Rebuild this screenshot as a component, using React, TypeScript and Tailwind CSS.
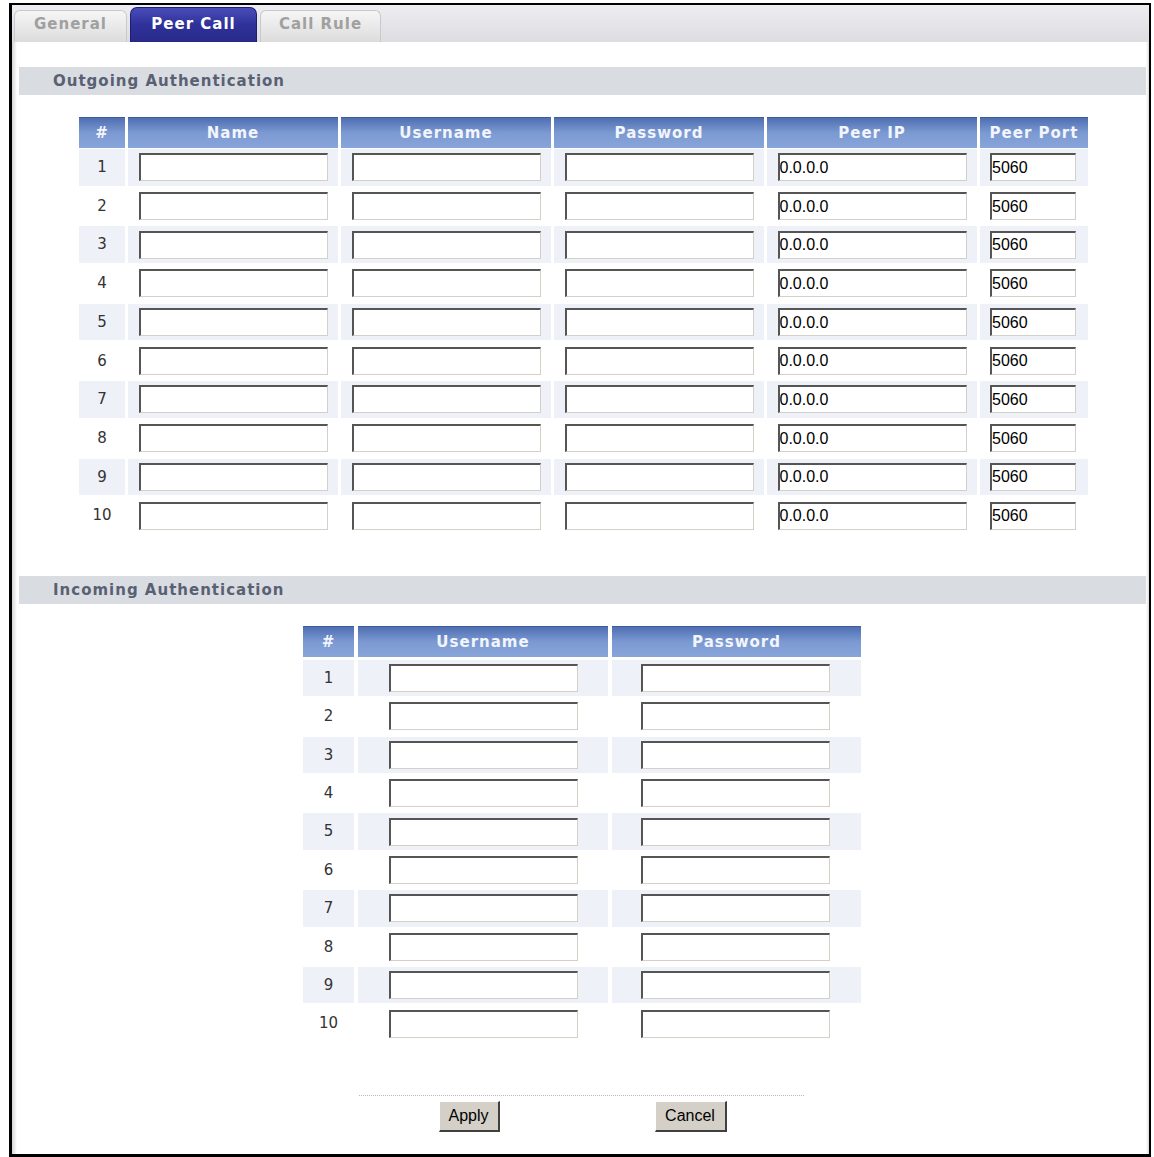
import React from "react";

const verdana = { fontFamily: '"DejaVu Sans", Verdana, sans-serif' };
const arial = { fontFamily: '"Liberation Sans", Arial, sans-serif' };

function TextBox({ value = "", w = 189 }: { value?: string; w?: number }) {
  return (
    <div
      className="h-[28px] shrink-0 bg-white border-t-2 border-l-2 border-b border-r border-t-[#555555] border-l-[#555555] border-b-[#d4d0c8] border-r-[#d4d0c8] flex items-center text-[16px] text-black leading-none overflow-hidden"
      style={{ ...arial, width: w }}
    >
      {value}
    </div>
  );
}

function HeadCell({ children, w }: { children: React.ReactNode; w: number }) {
  return (
    <div
      className="h-[31px] shrink-0 flex items-center justify-center bg-gradient-to-b from-[#4f6fb2] via-[#7c9ad2] to-[#88a5da] text-[#f2f5fc] font-bold text-[15px] tracking-[1px] border-t border-t-[#3e5c9e]"
      style={{ ...verdana, width: w }}
    >
      {children}
    </div>
  );
}

function SectionBar({ title }: { title: string }) {
  return (
    <div className="ml-[2px] h-[28px] bg-[#d9dde1] flex items-center pl-[34px]">
      <span className="text-[15px] font-bold text-[#5a6074] tracking-[1px]" style={verdana}>
        {title}
      </span>
    </div>
  );
}

function Tab({ label, active, w }: { label: string; active?: boolean; w: number }) {
  if (active) {
    return (
      <div
        className="h-[35px] rounded-t-[7px] bg-gradient-to-b from-[#4a4cb8] via-[#2f319a] to-[#282a8a] border border-[#1c1e6e] border-b-0 flex items-center justify-center text-white font-bold text-[15px] tracking-[1px] pb-[2px]"
        style={{ ...verdana, width: w }}
      >
        {label}
      </div>
    );
  }
  return (
    <div
      className="h-[32px] rounded-t-[6px] bg-gradient-to-b from-[#f6f6f6] to-[#dcdcdc] border border-[#c9c9cc] border-b-0 flex items-center justify-center text-[#a0a0a0] font-bold text-[15px] tracking-[1px] pb-[4px]"
      style={{ ...verdana, width: w }}
    >
      {label}
    </div>
  );
}

export default function App() {
  const rows = Array.from({ length: 10 }, (_, i) => i + 1);
  const outCols = [210, 210, 210];
  return (
    <div className="w-[1154px] h-[1157px] bg-white relative overflow-hidden">
      <div className="ml-[9px] mt-[3px] w-[1142px] h-[1154px] border-l-[3px] border-t-2 border-r-2 border-b-[3px] border-black flex flex-col">
        {/* tab strip */}
        <div className="h-[37px] bg-gradient-to-b from-[#eeedf1] to-[#dddce1] flex items-end pl-[2px] gap-[3px] shrink-0">
          <Tab label="General" w={113} />
          <Tab label="Peer Call" active w={127} />
          <Tab label="Call Rule" w={121} />
        </div>
        {/* body */}
        <div className="flex-1 flex min-w-0">
          <div className="w-[5px] shrink-0 bg-gradient-to-r from-[#d4d4d6] to-white" />
          <div className="flex-1 min-w-0 flex flex-col">
            <div className="h-[25px]" />
            <SectionBar title="Outgoing Authentication" />
            {/* Outgoing table */}
            <div className="mt-[22px] flex flex-col items-center pl-[4px]">
              <div className="flex gap-[3px]">
                <HeadCell w={46}>#</HeadCell>
                <HeadCell w={210}>Name</HeadCell>
                <HeadCell w={210}>Username</HeadCell>
                <HeadCell w={210}>Password</HeadCell>
                <HeadCell w={210}>Peer IP</HeadCell>
                <HeadCell w={108}>Peer Port</HeadCell>
              </div>
              {rows.map((r) => {
                const bg = r % 2 === 1 ? "bg-[#eef1f7]" : "bg-white";
                return (
                  <div key={r} className="flex gap-[3px] h-[38.7px] py-[1px]">
                    <div
                      className={`${bg} w-[46px] shrink-0 flex items-center justify-center text-[15px] text-[#333333]`}
                      style={verdana}
                    >
                      {r}
                    </div>
                    {outCols.map((w, ci) => (
                      <div key={ci} className={`${bg} shrink-0 flex items-center justify-center`} style={{ width: w }}>
                        <TextBox />
                      </div>
                    ))}
                    <div className={`${bg} w-[210px] shrink-0 flex items-center justify-center`}>
                      <TextBox value="0.0.0.0" />
                    </div>
                    <div className={`${bg} w-[108px] shrink-0 flex items-center justify-center pr-[2px]`}>
                      <TextBox value="5060" w={86} />
                    </div>
                  </div>
                );
              })}
            </div>
            <div className="h-[41px]" />
            <SectionBar title="Incoming Authentication" />
            {/* Incoming table */}
            <div className="mt-[22px] flex flex-col items-center pl-[1px]">
              <div className="flex gap-[4px] mb-[2px]">
                <HeadCell w={51}>#</HeadCell>
                <HeadCell w={250}>Username</HeadCell>
                <HeadCell w={249}>Password</HeadCell>
              </div>
              {rows.map((r) => {
                const bg = r % 2 === 1 ? "bg-[#eef1f7]" : "bg-white";
                return (
                  <div key={r} className="flex gap-[4px] h-[38.4px] py-[1px]">
                    <div
                      className={`${bg} w-[51px] shrink-0 flex items-center justify-center text-[15px] text-[#333333]`}
                      style={verdana}
                    >
                      {r}
                    </div>
                    <div className={`${bg} w-[250px] shrink-0 flex items-center justify-center`}>
                      <TextBox />
                    </div>
                    <div className={`${bg} w-[249px] shrink-0 flex items-center justify-center pr-[2px]`}>
                      <TextBox />
                    </div>
                  </div>
                );
              })}
            </div>
            {/* buttons */}
            <div className="mt-[52px] flex flex-col items-center">
              <div className="w-[445px] border-t border-dotted border-[#b8b8b8]" />
              <div className="mt-[5px] flex gap-[155px] pl-[2px]">
                <button
                  className="w-[61px] h-[31px] bg-[#d4d0c8] border-t border-l border-t-white border-l-white border-r-2 border-b-2 border-r-[#404040] border-b-[#404040] text-[16px] text-black"
                  style={arial}
                >
                  Apply
                </button>
                <button
                  className="w-[72px] h-[31px] bg-[#d4d0c8] border-t border-l border-t-white border-l-white border-r-2 border-b-2 border-r-[#404040] border-b-[#404040] text-[16px] text-black"
                  style={arial}
                >
                  Cancel
                </button>
              </div>
            </div>
          </div>
          <div className="w-[3px] shrink-0 bg-gradient-to-r from-white to-[#dcdcde]" />
        </div>
      </div>
    </div>
  );
}
